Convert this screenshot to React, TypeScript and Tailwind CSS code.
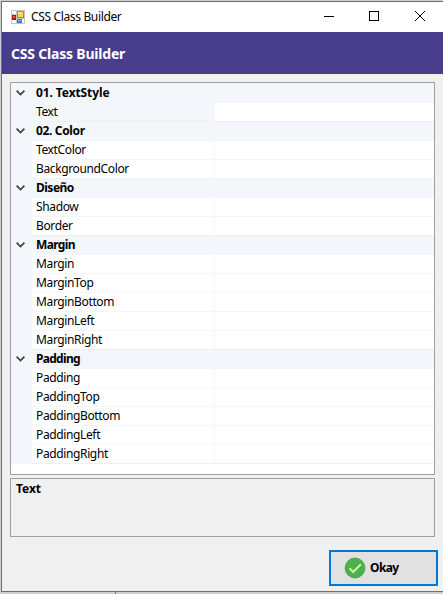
const sections: { title: string; tracking: string; items: string[] }[] = [
  { title: "01. TextStyle", tracking: "tracking-[-0.1px]", items: ["Text"] },
  { title: "02. Color", tracking: "tracking-[-0.35px]", items: ["TextColor", "BackgroundColor"] },
  { title: "Diseño", tracking: "tracking-[-0.5px]", items: ["Shadow", "Border"] },
  { title: "Margin", tracking: "tracking-[-0.65px]", items: ["Margin", "MarginTop", "MarginBottom", "MarginLeft", "MarginRight"] },
  { title: "Padding", tracking: "tracking-[-0.7px]", items: ["Padding", "PaddingTop", "PaddingBottom", "PaddingLeft", "PaddingRight"] },
];

function FormIcon() {
  return (
    <svg width="14" height="14" viewBox="0 0 14 14" shapeRendering="crispEdges">
      <rect width="14" height="14" fill="#c4c4c8" />
      <rect x="1" y="1" width="4" height="3" fill="#fff" />
      <rect x="1" y="10" width="4" height="3" fill="#fff" />
      <rect x="11" y="9" width="2" height="4" fill="#fff" />
      <rect x="6" y="1" width="7" height="7" fill="#b98a1c" />
      <rect x="7" y="2" width="5" height="5" fill="#ffd24a" />
      <rect x="7" y="2" width="4" height="2" fill="#ffe38a" />
      <rect x="1" y="5" width="4" height="5" fill="#a81a10" />
      <rect x="2" y="6" width="2" height="2" fill="#e0604c" />
      <rect x="6" y="9" width="5" height="4" fill="#3d74d0" />
      <rect x="7" y="10" width="3" height="1" fill="#8ebcff" />
    </svg>
  );
}

function TitleBar() {
  return (
    <div className="flex h-[30px] shrink-0 items-center bg-white pl-[9px] text-[12px]">
      <FormIcon />
      <span className="ml-[6px] whitespace-nowrap tracking-[-0.35px]">CSS Class Builder</span>
      <svg className="ml-auto shrink-0" width="119" height="30" viewBox="0 0 119 30" fill="none" stroke="#000">
        <path d="M0 14.5h10" />
        <rect x="45.5" y="9.5" width="9" height="9" />
        <path d="M91 9l10 10M101 9l-10 10" />
      </svg>
    </div>
  );
}

function Category({ title, tracking }: { title: string; tracking: string }) {
  return (
    <div className="flex h-[19px] items-center bg-[#f3f7fc] pb-[2px] font-bold">
      <svg className="ml-[5px] mr-[11px]" width="9" height="6" viewBox="0 0 9 6" fill="none" stroke="#404040" strokeWidth="1.7">
        <path d="M0.6 0.7L4.5 4.6L8.4 0.7" />
      </svg>
      <span className={`whitespace-nowrap ${tracking}`}>{title}</span>
    </div>
  );
}

function Property({ name, selected, last }: { name: string; selected: boolean; last: boolean }) {
  const line = selected || last ? "border-b-[#f0f0f0]" : "border-b-[#f3f7fc]";
  return (
    <div className="flex h-[19px] bg-[#f3f7fc] pl-[21px]">
      <div className={`flex w-[183px] items-center border-r border-b border-r-[#f3f7fc] pl-1 ${line} ${selected ? "bg-[#f3f7fc]" : "bg-white"}`}>
        <span className="whitespace-nowrap tracking-[-0.37px]">{name}</span>
      </div>
      <div className={`flex-1 border-b bg-white ${line}`} />
    </div>
  );
}

export default function App() {
  return (
    <div className="flex h-[594px] w-[443px] flex-col overflow-hidden bg-[#cecece] pl-px pt-px font-['Noto_Sans','Open_Sans',sans-serif] text-[12px] leading-[18px] text-black">
      <div className="flex h-[591px] flex-col border-y border-l border-[#707070] bg-[#f0f0f0]">
        <TitleBar />
        <header className="flex h-[42px] shrink-0 items-center bg-[#483d8b] pl-[9px] pt-[2px] text-[14px] font-bold text-white">
          <span className="whitespace-nowrap tracking-[-0.2px]">CSS Class Builder</span>
        </header>
        <main className="flex flex-col pl-2 pr-2 pt-2">
          <div className="h-[393px] border border-[#a0a0a0] bg-white">
            <div className="h-px bg-[#f3f7fc]" />
            {sections.map((s) => (
              <div key={s.title}>
                <Category title={s.title} tracking={s.tracking} />
                {s.items.map((n, i) => (
                  <Property key={n} name={n} selected={n === "Text"} last={i === s.items.length - 1} />
                ))}
              </div>
            ))}
          </div>
          <div className="mt-[3px] h-[59px] border border-[#a0a0a0] pl-[5px] pt-px font-bold">
            <span className="tracking-[-0.05px]">Text</span>
          </div>
        </main>
        <button className="ml-auto mr-[5px] mt-[13px] flex h-9 w-[109px] items-center border-2 border-[#0078d7] bg-[#e1e1e1] pl-[13px] font-bold">
          <svg width="22" height="22" viewBox="0 0 22 22">
            <circle cx="11" cy="11" r="10.4" fill="#4caf50" />
            <path d="M5.5 11.3L9.2 15L16.8 7.2" fill="none" stroke="#ccff90" strokeWidth="2" />
          </svg>
          <span className="ml-1 tracking-[-0.6px]">Okay</span>
        </button>
      </div>
      <div className="flex h-[2px]">
        <div className="w-[114px]" />
        <div className="w-px bg-[#808080]" />
      </div>
    </div>
  );
}
